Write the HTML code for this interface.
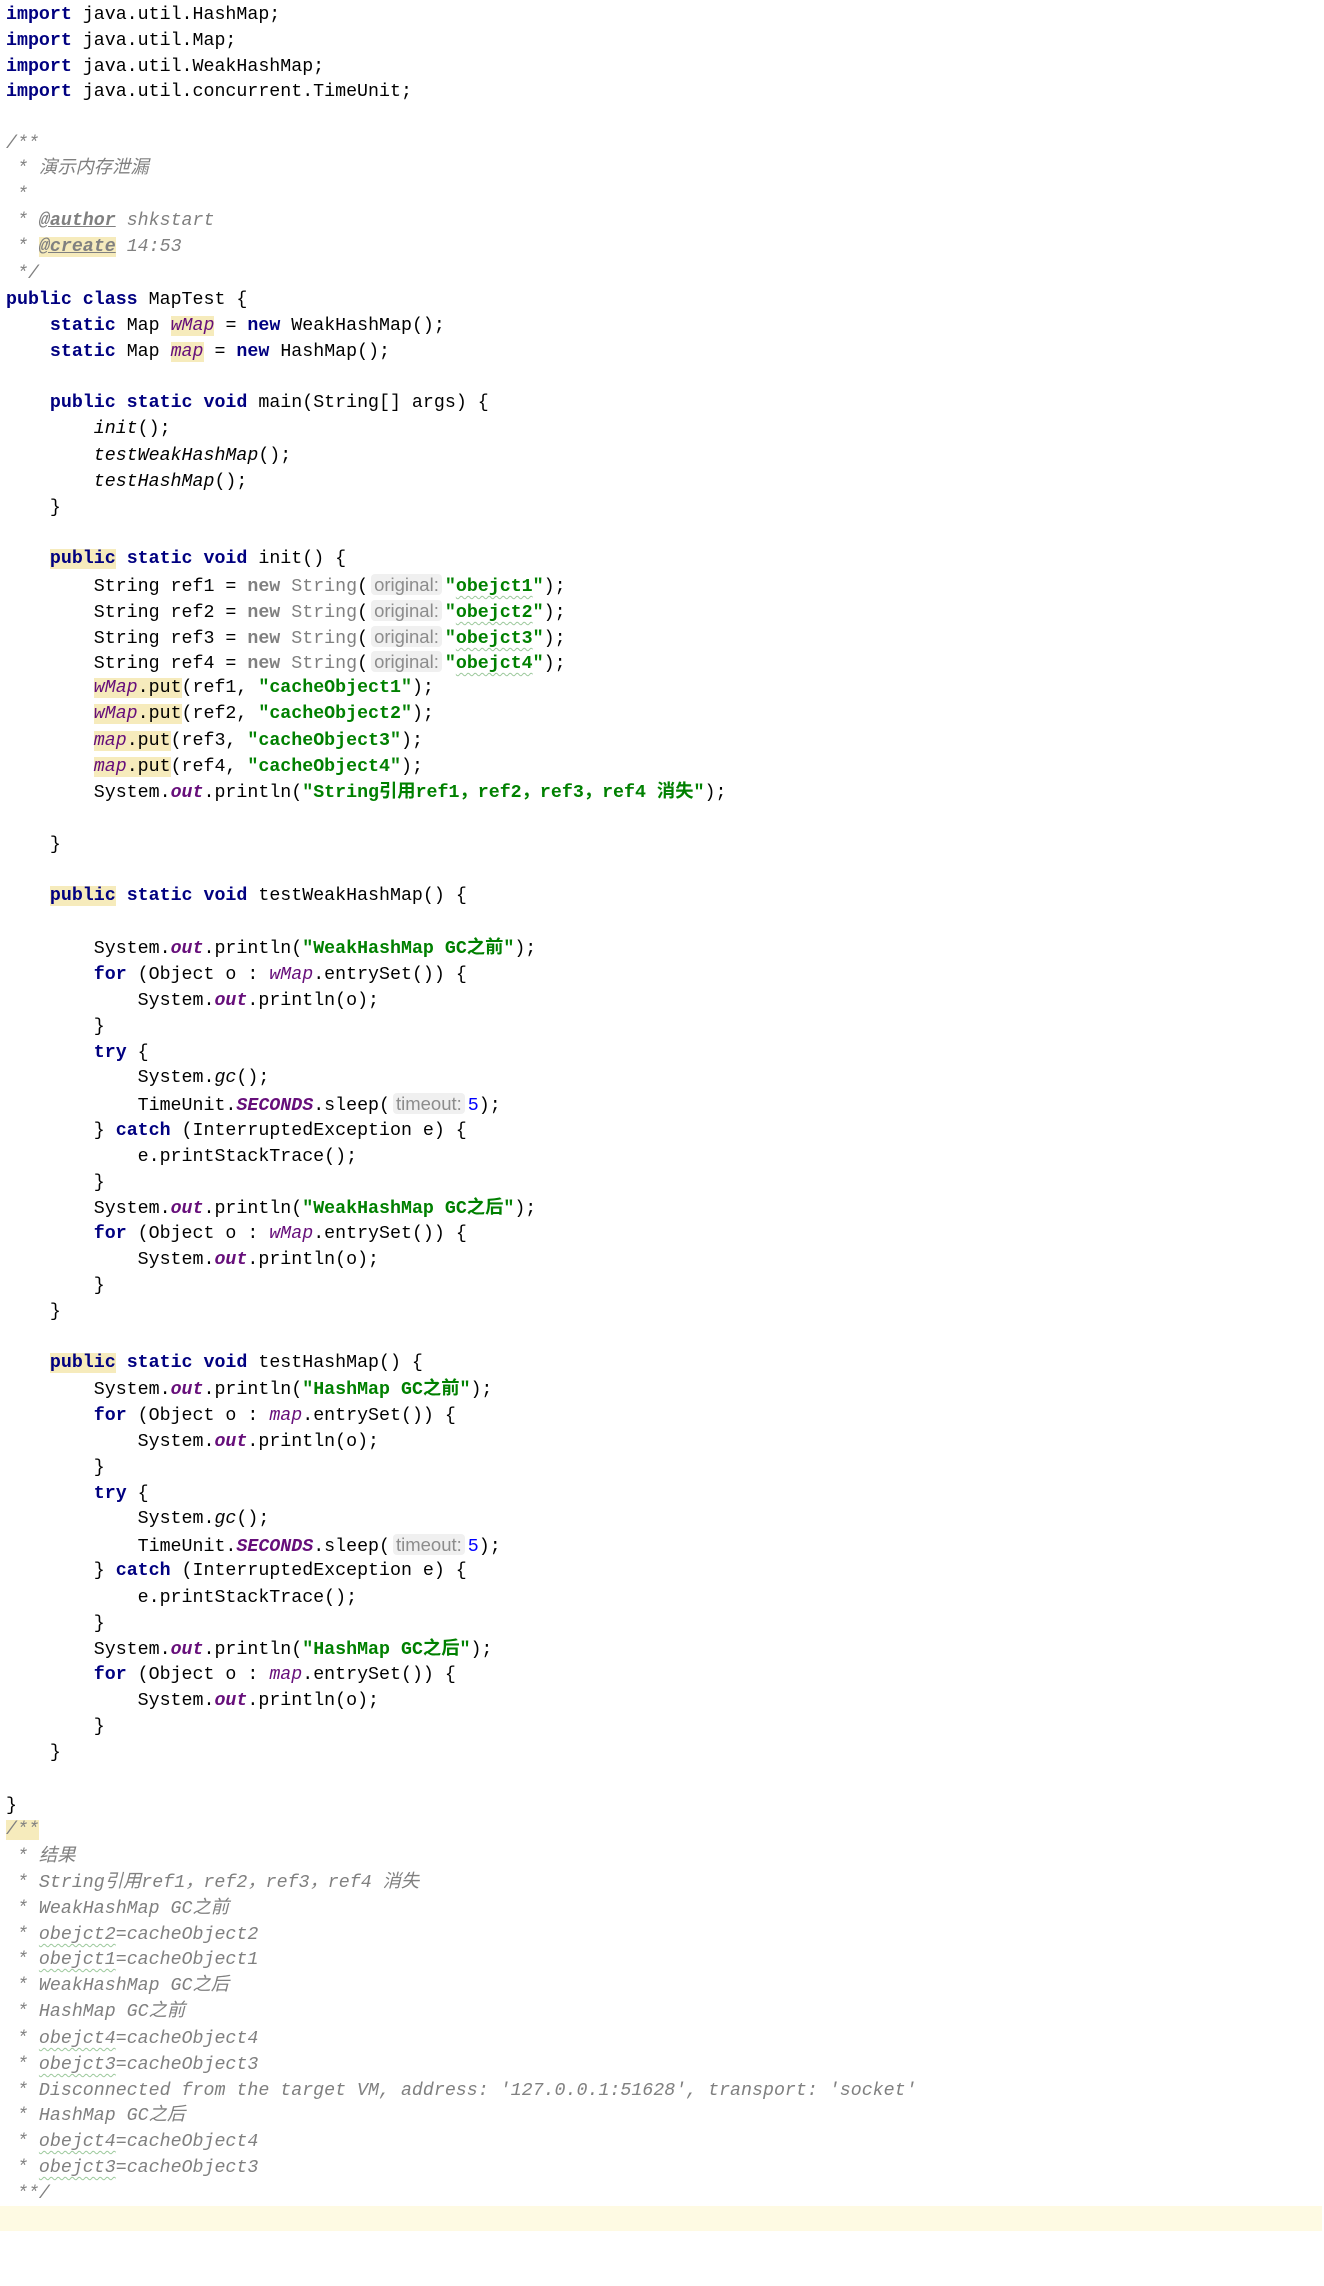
<!DOCTYPE html>
<html><head><meta charset="utf-8"><style>
body{margin:0;width:1324px;height:2286px;background:#fff;position:relative;overflow:hidden;font-family:"Liberation Mono","Noto Sans CJK SC",monospace;font-size:18.3px;color:#000}
#w{position:absolute;left:0;top:3px;width:1324px;height:2280px}
.l{position:absolute;left:6px;height:26px;line-height:26px;white-space:pre}
.k{color:#000080;font-weight:bold}
.s{color:#008000;font-weight:bold}
.c{color:#808080;font-style:italic}
.f{color:#660e7a;font-style:italic}
.fb{color:#660e7a;font-style:italic;font-weight:bold}
.g{color:#808080}
.n{color:#0000ff}
.h{background:#f6ebbc}
.hint{font-family:"Liberation Sans",sans-serif;font-size:18.5px;color:#8c8c8c;background:#f0f0f0;border-radius:4px;padding:0 3px;margin:0 3px}
.w{text-decoration:underline wavy #9bc89b;text-decoration-thickness:1px;text-underline-offset:4px}
.u{text-decoration:underline #808080}
.band{position:absolute;left:0;top:2206px;width:1322px;height:25px;background:#fefae3}
</style></head><body>
<div class="band"></div>
<div id="w">
<div class="l" style="top:-1px"><span class="k">import</span> java.util.HashMap;</div>
<div class="l" style="top:25px"><span class="k">import</span> java.util.Map;</div>
<div class="l" style="top:51px"><span class="k">import</span> java.util.WeakHashMap;</div>
<div class="l" style="top:76px"><span class="k">import</span> java.util.concurrent.TimeUnit;</div>
<div class="l c" style="top:128px">/**</div>
<div class="l c" style="top:153px"> * 演示内存泄漏</div>
<div class="l c" style="top:179px"> *</div>
<div class="l c" style="top:205px"> * <span class="u" style="font-weight:bold">@author</span> shkstart</div>
<div class="l c" style="top:231px"> * <span class="u h" style="font-weight:bold">@create</span> 14:53</div>
<div class="l c" style="top:258px"> */</div>
<div class="l" style="top:284px"><span class="k">public class</span> MapTest {</div>
<div class="l" style="top:310px">    <span class="k">static</span> Map <span class="f h">wMap</span> = <span class="k">new</span> WeakHashMap();</div>
<div class="l" style="top:336px">    <span class="k">static</span> Map <span class="f h">map</span> = <span class="k">new</span> HashMap();</div>
<div class="l" style="top:387px">    <span class="k">public static void</span> main(String[] args) {</div>
<div class="l" style="top:413px">        <i>init</i>();</div>
<div class="l" style="top:440px">        <i>testWeakHashMap</i>();</div>
<div class="l" style="top:466px">        <i>testHashMap</i>();</div>
<div class="l" style="top:492px">    }</div>
<div class="l" style="top:543px">    <span class="k h">public</span><span class="k"> static void</span> init() {</div>
<div class="l" style="top:569px">        String ref1 = <span class="g"><b>new</b> String</span>(<span class="hint">original:</span><span class="s">"<span class="w">obejct1</span>"</span>);</div>
<div class="l" style="top:595px">        String ref2 = <span class="g"><b>new</b> String</span>(<span class="hint">original:</span><span class="s">"<span class="w">obejct2</span>"</span>);</div>
<div class="l" style="top:621px">        String ref3 = <span class="g"><b>new</b> String</span>(<span class="hint">original:</span><span class="s">"<span class="w">obejct3</span>"</span>);</div>
<div class="l" style="top:646px">        String ref4 = <span class="g"><b>new</b> String</span>(<span class="hint">original:</span><span class="s">"<span class="w">obejct4</span>"</span>);</div>
<div class="l" style="top:672px">        <span class="h"><span class="f">wMap</span>.put</span>(ref1, <span class="s">"cacheObject1"</span>);</div>
<div class="l" style="top:698px">        <span class="h"><span class="f">wMap</span>.put</span>(ref2, <span class="s">"cacheObject2"</span>);</div>
<div class="l" style="top:725px">        <span class="h"><span class="f">map</span>.put</span>(ref3, <span class="s">"cacheObject3"</span>);</div>
<div class="l" style="top:751px">        <span class="h"><span class="f">map</span>.put</span>(ref4, <span class="s">"cacheObject4"</span>);</div>
<div class="l" style="top:777px">        System.<span class="fb">out</span>.println(<span class="s">"String引用ref1，ref2，ref3，ref4 消失"</span>);</div>
<div class="l" style="top:829px">    }</div>
<div class="l" style="top:880px">    <span class="k h">public</span><span class="k"> static void</span> testWeakHashMap() {</div>
<div class="l" style="top:933px">        System.<span class="fb">out</span>.println(<span class="s">"WeakHashMap GC之前"</span>);</div>
<div class="l" style="top:959px">        <span class="k">for</span> (Object o : <span class="f">wMap</span>.entrySet()) {</div>
<div class="l" style="top:985px">            System.<span class="fb">out</span>.println(o);</div>
<div class="l" style="top:1011px">        }</div>
<div class="l" style="top:1037px">        <span class="k">try</span> {</div>
<div class="l" style="top:1062px">            System.<i>gc</i>();</div>
<div class="l" style="top:1088px">            TimeUnit.<span class="fb">SECONDS</span>.sleep(<span class="hint">timeout:</span><span class="n">5</span>);</div>
<div class="l" style="top:1115px">        } <span class="k">catch</span> (InterruptedException e) {</div>
<div class="l" style="top:1141px">            e.printStackTrace();</div>
<div class="l" style="top:1167px">        }</div>
<div class="l" style="top:1193px">        System.<span class="fb">out</span>.println(<span class="s">"WeakHashMap GC之后"</span>);</div>
<div class="l" style="top:1218px">        <span class="k">for</span> (Object o : <span class="f">wMap</span>.entrySet()) {</div>
<div class="l" style="top:1244px">            System.<span class="fb">out</span>.println(o);</div>
<div class="l" style="top:1270px">        }</div>
<div class="l" style="top:1296px">    }</div>
<div class="l" style="top:1347px">    <span class="k h">public</span><span class="k"> static void</span> testHashMap() {</div>
<div class="l" style="top:1374px">        System.<span class="fb">out</span>.println(<span class="s">"HashMap GC之前"</span>);</div>
<div class="l" style="top:1400px">        <span class="k">for</span> (Object o : <span class="f">map</span>.entrySet()) {</div>
<div class="l" style="top:1426px">            System.<span class="fb">out</span>.println(o);</div>
<div class="l" style="top:1452px">        }</div>
<div class="l" style="top:1478px">        <span class="k">try</span> {</div>
<div class="l" style="top:1503px">            System.<i>gc</i>();</div>
<div class="l" style="top:1529px">            TimeUnit.<span class="fb">SECONDS</span>.sleep(<span class="hint">timeout:</span><span class="n">5</span>);</div>
<div class="l" style="top:1555px">        } <span class="k">catch</span> (InterruptedException e) {</div>
<div class="l" style="top:1582px">            e.printStackTrace();</div>
<div class="l" style="top:1608px">        }</div>
<div class="l" style="top:1634px">        System.<span class="fb">out</span>.println(<span class="s">"HashMap GC之后"</span>);</div>
<div class="l" style="top:1659px">        <span class="k">for</span> (Object o : <span class="f">map</span>.entrySet()) {</div>
<div class="l" style="top:1685px">            System.<span class="fb">out</span>.println(o);</div>
<div class="l" style="top:1711px">        }</div>
<div class="l" style="top:1737px">    }</div>
<div class="l" style="top:1790px">}</div>
<div class="l c" style="top:1814px"><span class="h">/**</span></div>
<div class="l c" style="top:1841px"> * 结果</div>
<div class="l c" style="top:1867px"> * String引用ref1，ref2，ref3，ref4 消失</div>
<div class="l c" style="top:1893px"> * WeakHashMap GC之前</div>
<div class="l c" style="top:1919px"> * <span class="w">obejct2</span>=cacheObject2</div>
<div class="l c" style="top:1944px"> * <span class="w">obejct1</span>=cacheObject1</div>
<div class="l c" style="top:1970px"> * WeakHashMap GC之后</div>
<div class="l c" style="top:1996px"> * HashMap GC之前</div>
<div class="l c" style="top:2023px"> * <span class="w">obejct4</span>=cacheObject4</div>
<div class="l c" style="top:2049px"> * <span class="w">obejct3</span>=cacheObject3</div>
<div class="l c" style="top:2075px"> * Disconnected from the target VM, address: '127.0.0.1:51628', transport: 'socket'</div>
<div class="l c" style="top:2100px"> * HashMap GC之后</div>
<div class="l c" style="top:2126px"> * <span class="w">obejct4</span>=cacheObject4</div>
<div class="l c" style="top:2152px"> * <span class="w">obejct3</span>=cacheObject3</div>
<div class="l c" style="top:2178px"> **/</div>
</div>
</body></html>
